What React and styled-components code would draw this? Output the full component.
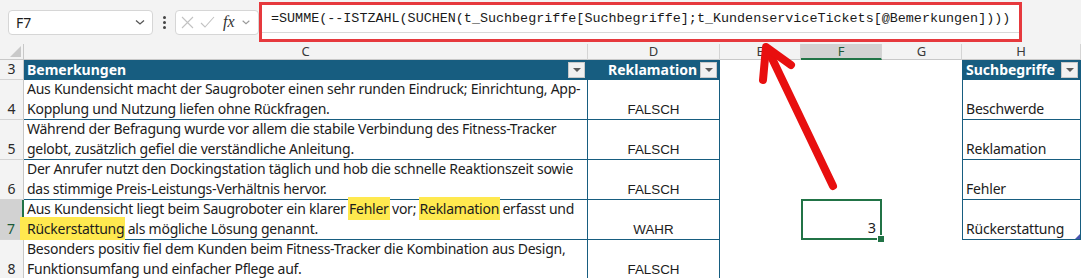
import React from "react";
import styled, { createGlobalStyle, css } from "styled-components";

const GlobalStyle = createGlobalStyle`
  html, body { margin: 0; padding: 0; background: #ffffff; overflow: hidden; }
  * { box-sizing: border-box; }
`;

const BLUE = "#175d80";
const GREEN = "#217346";
const TEXT_FONT = `"Noto Sans", "Open Sans", sans-serif`;

const Page = styled.div`
  position: relative;
  width: 1081px;
  height: 278px;
  overflow: hidden;
  font-family: ${TEXT_FONT};
  color: #1c1c1c;
`;

const TopBar = styled.div`
  height: 44px;
  background: #f3f3f3;
  display: flex;
  align-items: center;
  padding-left: 8px;
`;

const NameBox = styled.div`
  width: 145px;
  height: 25px;
  background: #fff;
  border: 1px solid #d6d6d6;
  border-radius: 4px;
  display: flex;
  align-items: center;
  justify-content: space-between;
  padding: 0 6px 0 7px;
  font-size: 14px;
`;

const Dots = styled.div`
  width: 22px;
  display: flex;
  flex-direction: column;
  align-items: center;
  gap: 2px;
  span {
    width: 3px;
    height: 3px;
    border-radius: 50%;
    background: #444;
  }
`;

const FuncBox = styled.div`
  width: 84px;
  height: 25px;
  background: #fff;
  border: 1px solid #d6d6d6;
  border-radius: 4px;
  display: flex;
  align-items: center;
  gap: 6px;
  padding: 0 4px 0 5px;
  color: #b9b9b9;
`;

const Fx = styled.span`
  font-family: "Liberation Serif", serif;
  font-style: italic;
  font-size: 16px;
  color: #333;
  margin-left: 2px;
`;

const FormulaFrame = styled.div`
  width: 763px;
  height: 40px;
  border: 3px solid #e6393d;
  background: #fff;
  display: flex;
  align-items: flex-start;
`;

const FormulaInput = styled.div`
  flex: 1;
  height: 28px;
  border-bottom: 1px solid #d9d9d9;
  padding: 6px 0 0 9px;
  font-family: "Liberation Mono", "DejaVu Sans Mono", monospace;
  font-size: 13.4px;
  color: #1a1a1a;
  white-space: nowrap;
`;

const Grid = styled.div`
  display: grid;
  grid-template-columns: 24px 564px 132px 81px 81px 80px 119px;
  grid-template-rows: 16px 20px repeat(5, 40px);
`;

const ColHead = styled.div`
  background: ${(p) => (p.$active ? "#d2d2d2" : "#f3f3f3")};
  border-right: 1px solid #d4d4d4;
  border-bottom: ${(p) => (p.$active ? `2px solid ${GREEN}` : "1px solid #c8c8c8")};
  font-size: 13px;
  line-height: 15px;
  text-align: center;
  color: ${(p) => (p.$active ? "#1c5a38" : "#3a3a3a")};
`;

const Corner = styled.div`
  background: #f3f3f3;
  border-right: 1px solid #c8c8c8;
  border-bottom: 1px solid #c8c8c8;
  position: relative;
  &::after {
    content: "";
    position: absolute;
    right: 2px;
    bottom: 2px;
    border-left: 11px solid transparent;
    border-bottom: 11px solid #c9c9c9;
  }
`;

const RowHead = styled.div`
  background: ${(p) => (p.$active ? "#d2d2d2" : "#f3f3f3")};
  border-right: ${(p) => (p.$active ? `2px solid ${GREEN}` : "1px solid #c8c8c8")};
  border-bottom: 1px solid #d4d4d4;
  display: flex;
  align-items: flex-end;
  justify-content: center;
  font-size: 14px;
  line-height: 20px;
  color: ${(p) => (p.$active ? "#1c5a38" : "#2a2a2a")};
`;

const tableBorder = css`
  border-bottom: 1px solid ${BLUE};
  border-right: 1px solid ${BLUE};
`;

const HeadCell = styled.div`
  background: ${BLUE};
  color: #fff;
  font-weight: 700;
  font-size: 14px;
  line-height: 20px;
  display: flex;
  align-items: center;
  justify-content: ${(p) => (p.$center ? "flex-end" : "space-between")};
  gap: 3px;
  padding: 0 2px 0 3px;
  ${(p) => p.$left && `border-left: 1px solid ${BLUE};`}
  border-right: 1px solid ${BLUE};
`;

const Drop = styled.span`
  width: 17px;
  height: 16px;
  background: #f1f1f1;
  border: 1px solid #c9c9c9;
  display: flex;
  align-items: center;
  justify-content: center;
  &::after {
    content: "";
    border-left: 4px solid transparent;
    border-right: 4px solid transparent;
    border-top: 4px solid #5a5a5a;
  }
`;

const TextCell = styled.div`
  ${tableBorder};
  padding-left: 3px;
  font-size: 14px;
  letter-spacing: -0.25px;
  line-height: 20px;
  white-space: nowrap;
  display: flex;
  flex-direction: column;
  justify-content: flex-end;
  position: relative;
  z-index: 1;
`;

const BoolCell = styled.div`
  ${tableBorder};
  display: flex;
  align-items: flex-end;
  justify-content: center;
  font-family: "Liberation Sans", Arial, sans-serif;
  font-size: 13.4px;
  line-height: 18px;
`;

const Empty = styled.div``;

const ValueCell = styled.div`
  position: relative;
  display: flex;
  align-items: flex-end;
  justify-content: flex-end;
  padding: 0 4px 1px 0;
  font-size: 14.5px;
  line-height: 20px;
  ${(p) =>
    p.$selected &&
    css`
      border: 2px solid ${GREEN};
      margin: -1px 0 0 0;
      &::after {
        content: "";
        position: absolute;
        right: -5px;
        bottom: -5px;
        width: 6px;
        height: 6px;
        background: ${GREEN};
        border: 1px solid #fff;
      }
    `}
`;

const TermCell = styled.div`
  border-left: 1px solid ${BLUE};
  border-right: 1px solid ${BLUE};
  border-bottom: 1px solid ${BLUE};
  display: flex;
  align-items: flex-end;
  padding: 0 0 0 3px;
  font-size: 14px;
  letter-spacing: -0.2px;
  line-height: 20px;
  position: relative;
  ${(p) =>
    p.$last &&
    css`
      &::after {
        content: "";
        position: absolute;
        right: 0;
        bottom: 0;
        border-left: 5px solid transparent;
        border-bottom: 5px solid #4655b0;
      }
    `}
`;

const Mark = styled.span`
  background: #ffe94f;
  padding: 2px 1px 2px;
  margin: 0 -1px;
  ${(p) =>
    p.$reach &&
    css`
      margin-left: -7px;
      padding-left: 7px;
    `}
`;

const Arrow = styled.svg`
  position: absolute;
  left: 0;
  top: 0;
  pointer-events: none;
  z-index: 5;
`;

const rows = [
  {
    n: 4,
    lines: [
      "Aus Kundensicht macht der Saugroboter einen sehr runden Eindruck; Einrichtung, App-",
      "Kopplung und Nutzung liefen ohne Rückfragen.",
    ],
    flag: "FALSCH",
    term: "Beschwerde",
  },
  {
    n: 5,
    lines: [
      "Während der Befragung wurde vor allem die stabile Verbindung des Fitness-Tracker",
      "gelobt, zusätzlich gefiel die verständliche Anleitung.",
    ],
    flag: "FALSCH",
    term: "Reklamation",
  },
  {
    n: 6,
    lines: [
      "Der Anrufer nutzt den Dockingstation täglich und hob die schnelle Reaktionszeit sowie",
      "das stimmige Preis-Leistungs-Verhältnis hervor.",
    ],
    flag: "FALSCH",
    term: "Fehler",
  },
  {
    n: 7,
    lines: [
      <>
        Aus Kundensicht liegt beim Saugroboter ein klarer <Mark>Fehler</Mark> vor;{" "}
        <Mark>Reklamation</Mark> erfasst und
      </>,
      <>
        <Mark $reach>Rückerstattung</Mark> als mögliche Lösung genannt.
      </>,
    ],
    flag: "WAHR",
    term: "Rückerstattung",
    value: "3",
    active: true,
  },
  {
    n: 8,
    lines: [
      "Besonders positiv fiel dem Kunden beim Fitness-Tracker die Kombination aus Design,",
      "Funktionsumfang und einfacher Pflege auf.",
    ],
    flag: "FALSCH",
  },
];

const Chevron = ({ color = "#555", size = 12 }) => (
  <svg width={size} height={size} viewBox="0 0 12 12">
    <path d="M2 4.5 L6 8 L10 4.5" fill="none" stroke={color} strokeWidth="1.3" />
  </svg>
);

export default function App() {
  return (
    <>
      <GlobalStyle />
      <Page>
        <TopBar>
          <NameBox>
            <span>F7</span>
            <Chevron />
          </NameBox>
          <Dots>
            <span />
            <span />
            <span />
          </Dots>
          <FuncBox>
            <svg width="13" height="13" viewBox="0 0 13 13">
              <path d="M1 1 L12 12 M12 1 L1 12" stroke="#c2c2c2" strokeWidth="1.1" />
            </svg>
            <svg width="15" height="13" viewBox="0 0 15 13">
              <path d="M1 7 L5 11 L14 1" fill="none" stroke="#c2c2c2" strokeWidth="1.1" />
            </svg>
            <Fx>fx</Fx>
            <Chevron color="#999" size={10} />
          </FuncBox>
          <FormulaFrame>
            <FormulaInput>
              =SUMME(--ISTZAHL(SUCHEN(t_Suchbegriffe[Suchbegriffe];t_KundenserviceTickets[@Bemerkungen])))
            </FormulaInput>
          </FormulaFrame>
        </TopBar>

        <Grid>
          <Corner />
          {["C", "D", "E", "F", "G", "H"].map((c) => (
            <ColHead key={c} $active={c === "F"}>
              {c}
            </ColHead>
          ))}

          <RowHead>3</RowHead>
          <HeadCell>
            Bemerkungen
            <Drop />
          </HeadCell>
          <HeadCell $center>
            Reklamation
            <Drop />
          </HeadCell>
          <Empty />
          <Empty />
          <Empty />
          <HeadCell $left>
            Suchbegriffe
            <Drop />
          </HeadCell>

          {rows.map((r) => (
            <React.Fragment key={r.n}>
              <RowHead $active={r.active}>{r.n}</RowHead>
              <TextCell>
                <div>{r.lines[0]}</div>
                <div>{r.lines[1]}</div>
              </TextCell>
              <BoolCell>{r.flag}</BoolCell>
              <Empty />
              <ValueCell $selected={r.active}>{r.value}</ValueCell>
              <Empty />
              {r.term ? <TermCell $last={r.n === 7}>{r.term}</TermCell> : <Empty />}
            </React.Fragment>
          ))}
        </Grid>

        <Arrow width="1081" height="278" viewBox="0 0 1081 278">
          <g fill="none" stroke="#e80f0f" strokeWidth="8" strokeLinecap="round" strokeLinejoin="round">
            <path d="M833 186 L768 50" />
            <path d="M763 80 L766 47 L791 65" />
          </g>
        </Arrow>
      </Page>
    </>
  );
}
